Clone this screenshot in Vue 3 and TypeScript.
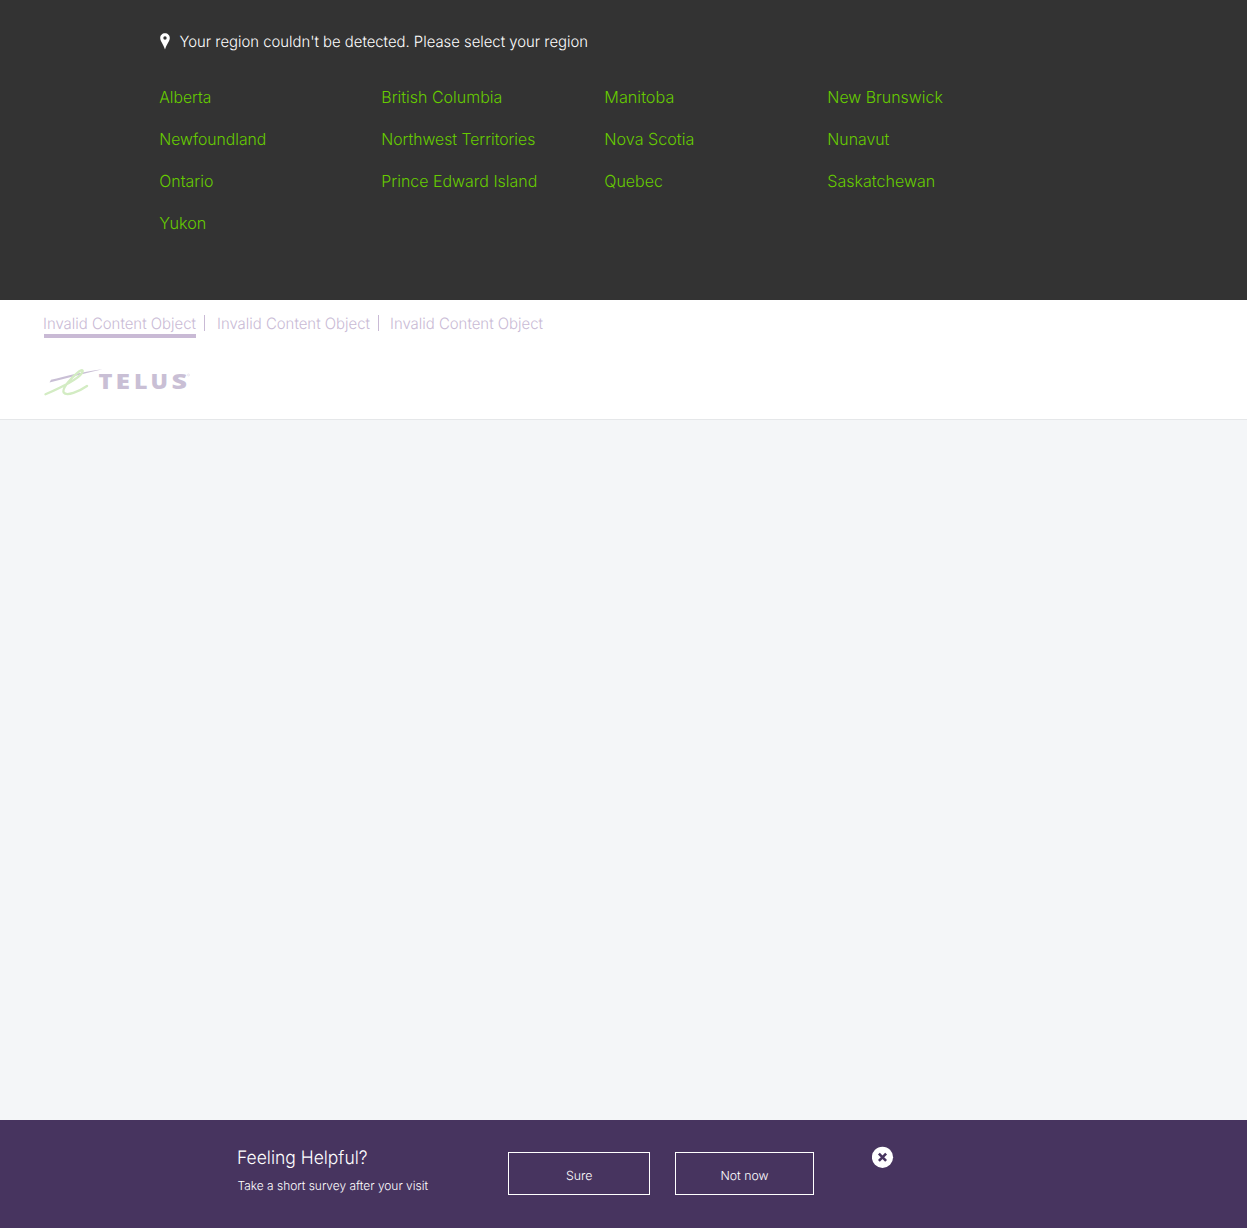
<script setup lang="ts">
interface Region {
  name: string
  width: number
}

const regions: Region[] = [
  { name: 'Alberta', width: 52 },
  { name: 'British Columbia', width: 121 },
  { name: 'Manitoba', width: 70 },
  { name: 'New Brunswick', width: 115.5 },
  { name: 'Newfoundland', width: 107 },
  { name: 'Northwest Territories', width: 154 },
  { name: 'Nova Scotia', width: 90 },
  { name: 'Nunavut', width: 62 },
  { name: 'Ontario', width: 54 },
  { name: 'Prince Edward Island', width: 156 },
  { name: 'Quebec', width: 58.5 },
  { name: 'Saskatchewan', width: 108 },
  { name: 'Yukon', width: 47 },
]

const tabs: string[] = ['Invalid Content Object', 'Invalid Content Object', 'Invalid Content Object']
</script>

<template>
  <div class="page">
    <section class="regions">
      <div class="prompt">
        <svg class="pin" width="10" height="17" viewBox="0 0 10 17">
          <path fill="#fff" fill-rule="evenodd" d="M5 .3C2.2.3.2 2.400.2 5c0 3.300 3.300 6.500 4.800 11.600C6.500 11.500 9.800 8.300 9.800 5 9.800 2.400 7.800.3 5 .3zM5 3.300a1.700 1.700 0 1 1 0 3.400 1.700 1.700 0 0 1 0-3.400z" />
        </svg>
        <svg class="line" width="410" height="24">
          <text x="-0.500" y="17" textLength="408.500" lengthAdjust="spacingAndGlyphs" font-size="15.500">Your region couldn't be detected. Please select your region</text>
        </svg>
      </div>
      <ul class="grid">
        <li v-for="region in regions" :key="region.name">
          <a>
            <svg class="line" :width="region.width" height="24">
              <text x="-0.700" y="17.200" :textLength="region.width" lengthAdjust="spacingAndGlyphs" font-size="16.500">{{ region.name }}</text>
            </svg>
          </a>
        </li>
      </ul>
    </section>

    <header class="header">
      <nav class="tabs">
        <a v-for="(tab, i) in tabs" :key="i" class="tab" :class="{ active: i === 0 }">
          <svg class="line" width="152" height="20">
            <text x="-1" y="15" textLength="153" lengthAdjust="spacingAndGlyphs" font-size="15.500">{{ tab }}</text>
          </svg>
        </a>
      </nav>
      <svg class="logo" width="160" height="40" viewBox="0 -6 160 40">
        <path fill="#c9bfd5" d="M7 10.800C22 7 38 2.800 58.500.2 42 3.700 24 9 5.500 13.600z" />
        <path fill="none" stroke="#d3ecc3" stroke-width="2.300" stroke-linecap="round" d="M1.500 25.300C14 19.800 31 12.300 37 5.200C40.200 1.500 38.500-.1 35 2.500C28 8 17.500 19.500 19.700 23.500C22.500 27.800 35 22.500 43 17" />
        <text class="wordmark" y="19.500" x="54.500" textLength="14" lengthAdjust="spacingAndGlyphs">T</text>
        <text class="wordmark" y="19.500" x="71.500" textLength="14.500" lengthAdjust="spacingAndGlyphs">E</text>
        <text class="wordmark" y="19.500" x="90" textLength="13.500" lengthAdjust="spacingAndGlyphs">L</text>
        <text class="wordmark" y="19.500" x="106.500" textLength="17.500" lengthAdjust="spacingAndGlyphs">U</text>
        <text class="wordmark" y="19.500" x="127.500" textLength="15.500" lengthAdjust="spacingAndGlyphs">S</text>
        <circle cx="144.500" cy="6" r="1" fill="none" stroke="#e0d9e7" stroke-width=".6" />
      </svg>
    </header>

    <main class="content"></main>

    <footer class="survey">
      <div class="copy">
        <svg class="line" width="130" height="26">
          <text x="-1" y="18" textLength="130.500" lengthAdjust="spacingAndGlyphs" font-size="18.500">Feeling Helpful?</text>
        </svg>
        <svg class="line" width="191" height="20">
          <text x="-0.500" y="18" textLength="190.500" lengthAdjust="spacingAndGlyphs" font-size="12.500">Take a short survey after your visit</text>
        </svg>
      </div>
      <button class="btn sure">
        <svg class="line" width="27" height="18"><text x="0" y="14" textLength="26.500" lengthAdjust="spacingAndGlyphs" font-size="12.500">Sure</text></svg>
      </button>
      <button class="btn later">
        <svg class="line" width="48" height="18"><text x="-0.500" y="14" textLength="48" lengthAdjust="spacingAndGlyphs" font-size="12.500">Not now</text></svg>
      </button>
      <svg class="close" width="22" height="22" viewBox="0 0 22 22">
        <circle cx="10.500" cy="11.300" r="10.600" fill="#fff" />
        <path d="M6.900 7.700l7.200 7.200M14.100 7.700l-7.200 7.200" stroke="#47345f" stroke-width="2.600" />
      </svg>
    </footer>
  </div>
</template>

<style>
body {
  margin: 0;
}
</style>

<style scoped>
.page {
  display: flex;
  flex-direction: column;
  height: 1228px;
  font-family: Inter, 'Liberation Sans', sans-serif;
  font-weight: 300;
  background: #f4f6f8;
}
svg {
  display: block;
  flex: none;
}
.line {
  fill: currentColor;
  overflow: visible;
  text-rendering: geometricPrecision;
}
.regions {
  box-sizing: border-box;
  height: 300px;
  padding: 30px 0 0 159.500px;
  background: #333;
  color: #fff;
}
.prompt {
  display: flex;
  gap: 10px;
}
.pin {
  margin-top: 3px;
}
.grid {
  display: grid;
  grid-template-columns: repeat(4, 222.750px);
  grid-auto-rows: 42px;
  list-style: none;
  margin: 32px 0 0;
  padding: 0;
  color: #66cc00;
}
.header {
  box-sizing: border-box;
  height: 120px;
  padding: 14px 0 0 44px;
  background: #fff;
  border-bottom: 1px solid #e5e7e9;
  color: #c9bad5;
}
.tabs {
  display: flex;
  height: 24px;
}
.tab {
  position: relative;
  margin-right: 21.500px;
}
.tab.active {
  box-sizing: border-box;
  border-bottom: 4px solid #c9bad5;
}
.tab:not(:last-child)::after {
  content: '';
  position: absolute;
  right: -9px;
  top: 1px;
  width: 1px;
  height: 16px;
  background: #c9bad5;
}
.logo {
  margin-top: 25px;
}
.wordmark {
  fill: #c9bfd5;
  font-family: 'Open Sans', 'Noto Sans', sans-serif;
  font-size: 21px;
  font-weight: 800;
}
.content {
  flex: 1;
}
.survey {
  box-sizing: border-box;
  display: flex;
  align-items: flex-start;
  height: 108px;
  padding: 26px 0 0 238px;
  background: #47345f;
  color: #fff;
}
.copy {
  width: 270px;
}
.btn {
  box-sizing: border-box;
  display: flex;
  align-items: center;
  justify-content: center;
  height: 43px;
  margin-top: 6px;
  padding: 3px 0 0;
  border: 1px solid #fff;
  background: none;
  color: inherit;
  font: inherit;
}
.sure {
  width: 142px;
}
.later {
  width: 139px;
  margin-left: 25px;
}
.close {
  margin-left: 58px;
}
</style>
